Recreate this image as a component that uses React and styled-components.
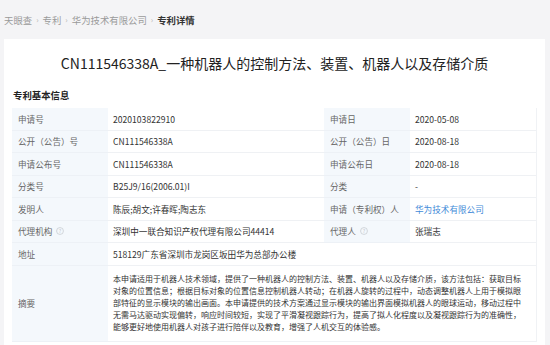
import React from "react";
import styled, { createGlobalStyle } from "styled-components";

const GlobalStyle = createGlobalStyle`
  html, body {
    margin: 0;
    padding: 0;
    background: #f4f4f6;
    font-family: "Noto Sans CJK SC", "Noto Sans", sans-serif;
  }
`;

const Page = styled.div`
  width: 550px;
  height: 345px;
  overflow: hidden;
  background: #f4f4f6;
`;

const Crumbs = styled.div`
  height: 39px;
  box-sizing: border-box;
  padding: 13px 4px 0;
  display: flex;
  align-items: flex-start;
  gap: 4px;
  font-size: 9.4px;
  line-height: 14px;
  color: #9a9a9a;
`;

const Crumb = styled.span`
  color: ${({ $current }) => ($current ? "#333" : "#9a9a9a")};
  font-weight: ${({ $current }) => ($current ? 700 : 400)};
`;

const Sep = styled.span`
  color: #b5b5b5;
  font-size: 8px;
`;

const Card = styled.div`
  margin-left: 4px;
  width: 541px;
  box-sizing: border-box;
  background: #fff;
  padding: 14px 8px 8px;
`;

const Title = styled.h1`
  margin: 0;
  text-align: center;
  font-size: 14px;
  line-height: 20px;
  font-weight: 400;
  color: #222;
`;

const SectionTitle = styled.h2`
  margin: 15px 0 6px 1px;
  font-size: 9.4px;
  line-height: 14px;
  font-weight: 700;
  color: #222;
`;

const Table = styled.div`
  display: grid;
  grid-template-columns: 96px 216px 86px 1fr;
  border-right: 1px solid #f0f2f5;
  font-size: 8.6px;
`;

const Label = styled.div`
  height: ${({ $tall }) => ($tall ? "auto" : "22.5px")};
  box-sizing: border-box;
  display: flex;
  align-items: center;
  gap: 4px;
  padding-left: 6px;
  background: #f4f8fc;
  color: #666;
  border-bottom: 1px solid #edf1f6;
`;

const Value = styled.div`
  grid-column: ${({ $span }) => ($span ? "span 3" : "auto")};
  min-height: 22.5px;
  box-sizing: border-box;
  display: flex;
  align-items: center;
  padding: ${({ $tall }) => ($tall ? "7px 8px 7px 5px" : "0 0 0 5px")};
  color: ${({ $link }) => ($link ? "#3f8ad8" : "#333")};
  border-bottom: 1px solid #eff1f4;
  white-space: nowrap;
`;

const Abstract = styled.div`
  display: flex;
  flex-direction: column;
  font-size: 8px;
  line-height: 12.2px;
  color: #333;
`;

const Line = styled.span`
  display: block;
  white-space: nowrap;
`;

const Hint = () => (
  <svg width="8" height="8" viewBox="0 0 10 10">
    <circle cx="5" cy="5" r="4.3" fill="none" stroke="#c4c8ce" strokeWidth="0.9" />
    <text x="5" y="7.3" fontSize="6.5" textAnchor="middle" fill="#c4c8ce">?</text>
  </svg>
);

const rows = [
  ["申请号", "2020103822910", "申请日", "2020-05-08"],
  ["公开（公告）号", "CN111546338A", "公开（公告）日", "2020-08-18"],
  ["申请公布号", "CN111546338A", "申请公布日", "2020-08-18"],
  ["分类号", "B25J9/16(2006.01)I", "分类", "-"],
  ["发明人", "陈辰;胡文;许春晖;陶志东", "申请（专利权）人", "华为技术有限公司", true],
];

const abstractLines = [
  "本申请适用于机器人技术领域，提供了一种机器人的控制方法、装置、机器人以及存储介质，该方法包括：获取目标",
  "对象的位置信息；根据目标对象的位置信息控制机器人转动；在机器人旋转的过程中，动态调整机器人上用于模拟眼",
  "部特征的显示模块的输出画面。本申请提供的技术方案通过显示模块的输出界面模拟机器人的眼球运动，移动过程中",
  "无需马达驱动实现偏转，响应时间较短，实现了平滑凝视跟踪行为，提高了拟人化程度以及凝视跟踪行为的准确性，",
  "能够更好地使用机器人对孩子进行陪伴以及教育，增强了人机交互的体验感。",
];

const App = () => {
  return (
    <Page>
      <GlobalStyle />
      <Crumbs>
        <Crumb>天眼查</Crumb>
        <Sep>›</Sep>
        <Crumb>专利</Crumb>
        <Sep>›</Sep>
        <Crumb>华为技术有限公司</Crumb>
        <Sep>›</Sep>
        <Crumb $current>专利详情</Crumb>
      </Crumbs>
      <Card>
        <Title>CN111546338A_一种机器人的控制方法、装置、机器人以及存储介质</Title>
        <SectionTitle>专利基本信息</SectionTitle>
        <Table>
          {rows.map(([l1, v1, l2, v2, link]) => (
            <React.Fragment key={l1}>
              <Label>{l1}</Label>
              <Value>{v1}</Value>
              <Label>{l2}</Label>
              <Value $link={link}>{v2}</Value>
            </React.Fragment>
          ))}
          <Label>
            代理机构 <Hint />
          </Label>
          <Value>深圳中一联合知识产权代理有限公司44414</Value>
          <Label>
            代理人 <Hint />
          </Label>
          <Value>张瑞志</Value>
          <Label>地址</Label>
          <Value $span>518129广东省深圳市龙岗区坂田华为总部办公楼</Value>
          <Label $tall>摘要</Label>
          <Value $span $tall>
            <Abstract>
              {abstractLines.map((t, i) => (
                <Line key={i}>{t}</Line>
              ))}
            </Abstract>
          </Value>
        </Table>
      </Card>
    </Page>
  );
};

export default App;
